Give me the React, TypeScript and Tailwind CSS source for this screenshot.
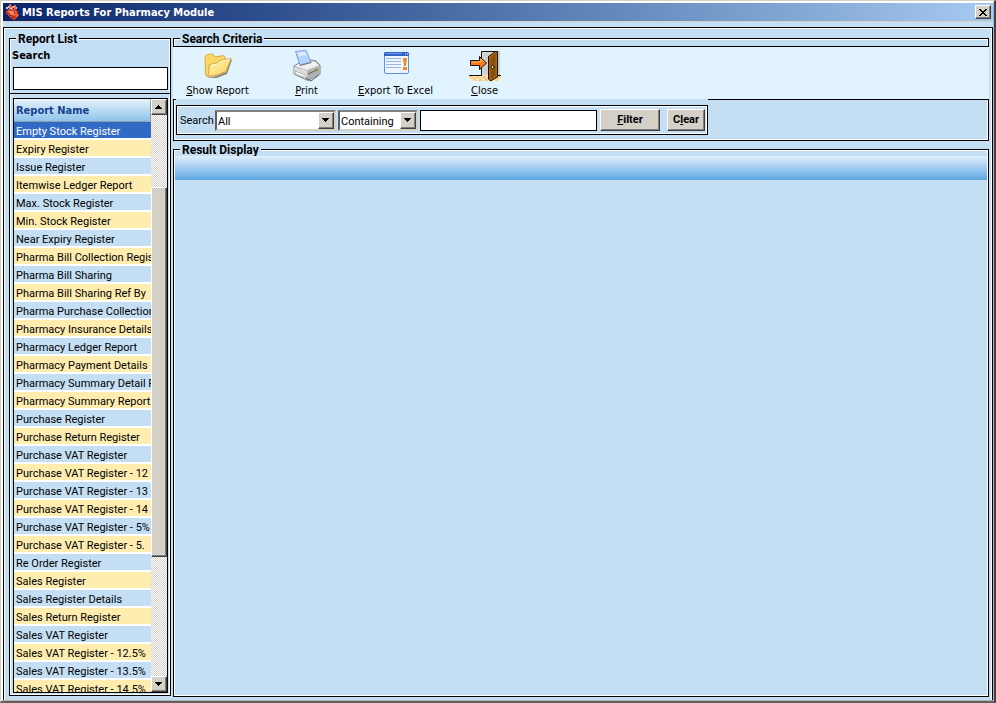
import type { ReactNode } from "react";

const reports = [
  "Empty Stock Register",
  "Expiry Register",
  "Issue Register",
  "Itemwise Ledger Report",
  "Max. Stock Register",
  "Min. Stock Register",
  "Near Expiry Register",
  "Pharma Bill Collection Regis",
  "Pharma Bill Sharing",
  "Pharma Bill Sharing Ref By",
  "Pharma Purchase Collection",
  "Pharmacy Insurance Details",
  "Pharmacy Ledger Report",
  "Pharmacy Payment Details",
  "Pharmacy Summary Detail F",
  "Pharmacy Summary Report",
  "Purchase Register",
  "Purchase Return Register",
  "Purchase VAT Register",
  "Purchase VAT Register - 12",
  "Purchase VAT Register - 13",
  "Purchase VAT Register - 14",
  "Purchase VAT Register - 5%",
  "Purchase VAT Register - 5.",
  "Re Order Register",
  "Sales Register",
  "Sales Register Details",
  "Sales Return Register",
  "Sales VAT Register",
  "Sales VAT Register - 12.5%",
  "Sales VAT Register - 13.5%",
  "Sales VAT Register - 14.5%",
];

const raised =
  "border border-t-white border-l-white border-r-[#404040] border-b-[#404040] bg-[#d4d0c8] shadow-[inset_-1px_-1px_0_#808080]";
const tahoma = "font-['DejaVu_Sans_Condensed','DejaVu_Sans',sans-serif]";

function HeartIcon() {
  return (
    <svg width="16" height="16" viewBox="0 0 16 16" shapeRendering="crispEdges" aria-hidden="true">
      <path d="M1 7 3 5 7 5 10 5 13 8 14 11 12 14 9 16 5 14 1 10Z" fill="#cf3a22" />
      <path d="M4 0h2v5H4zM6 2h2v4H6zM9 1h2v4H9z" fill="#e2705a" />
      <path d="M1 3h2v2H1zM3 2h1v2H3zM8 2h1v2H8zM5 4h2v1H5zM11 3h1v2h-1z" fill="#d9c4c8" />
      <path d="M3 7 7 7 9 9 10 12 7 11 4 9Z" fill="#f08a6a" />
      <path d="M9 6 12 8 13 11 11 13 10 9Z" fill="#e65f38" />
      <path d="M2 9h1v1H2zM5 11h2v1H5zM7 13h2v1H7zM9 8h1v1H9z" fill="#96200f" />
    </svg>
  );
}

function FolderIcon() {
  return (
    <svg width="32" height="32" viewBox="0 0 32 32" aria-hidden="true">
      <defs>
        <linearGradient id="folder" x1="0" y1="0" x2="1" y2="1">
          <stop offset="0" stopColor="#fff8b8" />
          <stop offset="1" stopColor="#fbce55" />
        </linearGradient>
      </defs>
      <path d="M6 28 14 26 24 22 29 9 30 10 25 24 15 28Z" fill="#8c8b80" />
      <path d="M3 6.500 5 4.500 11 4 13 7 22 5.500 23 7 24 21 6 27 3.500 25Z" fill="#f8d964" stroke="#d9ab42" />
      <path d="M6 26.500 7.500 14.500 15 13 18 10.500 29 8.500 24 21.500 15 25Z" fill="url(#folder)" stroke="#d5a63c" />
      <path d="M8.500 15.500 15.500 14 18.500 11.500 28 9.500" fill="none" stroke="#fffbd8" />
    </svg>
  );
}

function PrinterIcon() {
  return (
    <svg width="32" height="32" viewBox="0 0 32 32" aria-hidden="true">
      <path d="M3 16 9 12.500 20 10 25 11 29 15 29 24 17 30.500 3 24Z" fill="#c2c2c2" stroke="#808080" />
      <path d="M4 16 10 12.500 20 11 24 12 28 15 16 20Z" fill="#f0f0f0" />
      <path d="M4.500 1.500 15 .500 20 12 9 15Z" fill="#b4d3fd" stroke="#7aa0e4" />
      <path d="M6 2.500 14 1.500 16 5 8 6Z" fill="#deebff" />
      <path d="M9 15.500 20.500 12.500" stroke="#777" />
      <path d="M3 17 16 21 16 29 3 23.500Z" fill="#dcdcdc" />
      <path d="M16 21 29 16 29 24 17 30Z" fill="#b0b0b0" />
      <path d="M4 21 14 25 16 28 5 24.500Z" fill="#fafafa" stroke="#888" strokeWidth=".5" />
      <path d="M17 24 27 19.500M15 28 20 31 28 25" fill="none" stroke="#606060" />
      <path d="M24 19h2v2h-2z" fill="#5ba52c" />
    </svg>
  );
}

function ExportIcon() {
  return (
    <svg width="32" height="32" viewBox="0 0 32 32" aria-hidden="true">
      <rect x="4.500" y="2.500" width="24" height="21" rx="1.500" fill="#eef5ff" stroke="#5b8fe5" />
      <path d="M4 4q0-2 2-2h21q2 0 2 2v2H4Z" fill="#2e62c9" />
      <path d="M6 3.500h16" stroke="#6d9df0" />
      <path d="M25 4h1M27 4h1" stroke="#fff" />
      <path d="M6 8.500h15M6 11.500h15M6 14.500h15M6 17.500h15" stroke="#97b7e4" />
      <path d="M23 8h4l-1 8h-2zM23 17h4v3h-4z" fill="#ec8b18" />
    </svg>
  );
}

function DoorIcon() {
  return (
    <svg width="32" height="32" viewBox="0 0 32 32" aria-hidden="true">
      <path d="M0 25h13v-2h5l3 2h11v3l-3 3H3L0 28Z" fill="#ffe5b5" />
      <path d="M1 28 4 25M5 30 10 25M10 31 18 24M15 31 20 27M27 31 31 26M2 26 7 31M8 26 13 31M14 26 19 31" stroke="#f6b560" />
      <path d="M12.500 25V1.500H28.500V25" fill="#dededc" stroke="#111" />
      <path d="M14 2h6l-1 22h-5z" fill="#d0d0ce" />
      <path d="M30 1v24" stroke="#aaa" />
      <path d="M0 25.500h13M29 25.500h3" stroke="#111" />
      <path d="m19.500 6.500 7-5 2 .500v25l-7 4-2-2Z" fill="#a76610" stroke="#171006" />
      <path d="m21.500 8 5-4v22l-5 3Z" fill="#885008" />
      <circle cx="23.500" cy="17" r="1.500" fill="#fff0a0" stroke="#111" />
      <path d="M1.500 10.500h9v-4l7 6.500-7 6.500v-4h-9Z" fill="#ff7719" stroke="#151515" />
      <path d="M3 12h9V9l3 3" fill="none" stroke="#ffb850" />
    </svg>
  );
}

function ToolButton({ icon, first, rest }: { icon: ReactNode; first: string; rest: string }) {
  return (
    <button type="button" className={`flex w-[89px] flex-col items-center gap-[3px] text-[11px] leading-3 whitespace-nowrap ${tahoma}`}>
      {icon}
      <span>
        <u>{first}</u>
        {rest}
      </span>
    </button>
  );
}

function Group({ title, className, children }: { title: string; className: string; children: ReactNode }) {
  return (
    <fieldset className={`flex min-w-0 flex-col border border-black shadow-[inset_0_0_0_1px_white] ${className}`}>
      <legend className="ml-1.5 h-[15px] bg-[#c4dff4] px-0.5 text-[12px] leading-4 font-bold font-[Roboto,sans-serif]">
        {title}
      </legend>
      {children}
    </fieldset>
  );
}

function Arrow({ up = false }: { up?: boolean }) {
  return (
    <svg width="8" height="4" viewBox="0 0 8 4" shapeRendering="crispEdges" aria-hidden="true">
      <path d={up ? "M0 4h7L4 0H3z" : "M0 0h7L4 4H3z"} />
    </svg>
  );
}

function DropDown({ label, options, className }: { label: string; options: string[]; className: string }) {
  return (
    <div className={`relative h-[21px] border-2 border-t-[#808080] border-l-[#606060] border-r-[#d4d0c8] border-b-[#d4d0c8] bg-white ${className}`}>
      <select aria-label={label} className="block h-full w-full appearance-none bg-white pt-0.5 pl-px text-[11px] leading-4 outline-none">
        {options.map((o) => (
          <option key={o}>{o}</option>
        ))}
      </select>
      <span className={`pointer-events-none absolute inset-y-0 right-0 flex w-4 items-center justify-center ${raised}`}>
        <Arrow />
      </span>
    </div>
  );
}

function ScrollBar() {
  return (
    <div className="flex w-4 shrink-0 flex-col bg-[#fff] bg-[repeating-conic-gradient(#d4d0c8_0_25%,white_0_50%)] bg-[length:2px_2px]">
      <button type="button" aria-label="Scroll up" className={`flex h-4 items-center justify-center ${raised}`}>
        <Arrow up />
      </button>
      <div className="flex min-h-0 flex-1 flex-col">
        <div className="flex-[72]" />
        <div className={`flex-[370] ${raised}`} />
        <div className="flex-[119]" />
      </div>
      <button type="button" aria-label="Scroll down" className={`flex h-4 items-center justify-center ${raised}`}>
        <Arrow />
      </button>
    </div>
  );
}

export default function App() {
  return (
    <div className="flex h-screen flex-col overflow-hidden border-t border-r-2 border-b-2 border-l border-t-[#d4d0c8] border-r-[#404040] border-b-[#606060] border-l-[#d4d0c8] bg-[#c4dff4] font-[Roboto,'Liberation_Sans',sans-serif] text-[11px] text-black">
      <div className="flex min-h-0 flex-1 flex-col border-t-2 border-r border-b border-l-2 border-t-white border-r-[#9db8dc] border-b-[#b8b4ac] border-l-white">
        <header className="flex h-[19px] shrink-0 items-center border-b border-[#d4d0c8] bg-linear-to-r from-[#0a246a] to-[#a6caf0] pr-0.5 pl-0.5">
          <HeartIcon />
          <h1 className={`flex-1 pt-0.5 pl-px text-[11px] leading-4 font-bold text-white ${tahoma}`}>MIS Reports For Pharmacy Module</h1>
          <button type="button" aria-label="Close window" className={`flex h-3.5 w-4 items-center justify-center ${raised}`}>
            <svg width="8" height="7" viewBox="0 0 8 7" shapeRendering="crispEdges" aria-hidden="true">
              <path d="M0 0h2v1h1v1h2V1h1V0h2v1H7v1H6v1H5v1h1v1h1v1h1v1H6V6H5V5H3v1H2v1H0V6h1V5h1V4h1V3H2V2H1V1H0z" />
            </svg>
          </button>
        </header>

        <main className="mt-[5px] flex min-h-0 flex-1 gap-0.5 border border-b-0 border-black pt-[3px] pr-[3px] pb-[3px] pl-[5px] shadow-[inset_1px_1px_0_white,inset_-1px_0_0_white]">
          <Group title="Report List" className="mb-px w-[162px] shrink-0">
            <div className="flex flex-col border-b border-black pr-0.5 pb-[3px] pl-[3px]">
              <label htmlFor="report-search" className={`-ml-px h-[21px] text-[11px] leading-5 font-bold ${tahoma}`}>
                Search
              </label>
              <input id="report-search" className="h-[23px] w-full border border-black bg-white px-1 outline-none" />
            </div>
            <div className="mt-1 mr-0.5 mb-0.5 ml-[3px] flex min-h-0 flex-1 border border-black bg-white">
              <div className="min-h-0 min-w-0 flex-1 overflow-hidden">
                <table className="w-full table-fixed border-separate border-spacing-0">
                  <thead>
                    <tr>
                      <th className={`h-[23px] border-r border-b border-[#8f9fae] bg-linear-to-b from-[#e6f2fb] to-[#8fc3ea] p-0 pt-0.5 pl-0.5 text-left text-[11px] leading-4 font-bold text-[#154290] ${tahoma}`}>
                        Report Name
                      </th>
                    </tr>
                  </thead>
                  <tbody>
                    {reports.map((name, i) => (
                      <tr key={name} className={i === 0 ? "bg-[#316ac5] text-white" : i % 2 ? "bg-[#ffedb0]" : "bg-[#c4dff4]"}>
                        <td className="h-[18px] border-b-2 border-white p-0 pl-0.5">
                          <div className="h-4 leading-5 whitespace-nowrap">{name}</div>
                        </td>
                      </tr>
                    ))}
                  </tbody>
                </table>
              </div>
              <ScrollBar />
            </div>
          </Group>

          <div className="flex min-w-0 flex-1 flex-col gap-px">
            <Group title="Search Criteria" className="shrink-0">
              <div className="relative -mx-px border-t border-black bg-[#e1f3fd]">
                <div className="flex h-[52px] items-start pt-[3px]">
                  <ToolButton icon={<FolderIcon />} first="S" rest="how Report" />
                  <ToolButton icon={<PrinterIcon />} first="P" rest="rint" />
                  <ToolButton icon={<ExportIcon />} first="E" rest="xport To Excel" />
                  <ToolButton icon={<DoorIcon />} first="C" rest="lose" />
                </div>
              </div>
              <div className="flex">
                <div className="w-0.5 border-t border-black" />
                <form className="mt-1.5 mb-[5px] flex h-[30px] items-center border border-black pr-0.5 pl-[3px] shadow-[inset_0_0_0_1px_white]">
                  <span className="w-[35px] pt-0.5 text-[11px]">Search</span>
                  <DropDown label="Search field" options={["All"]} className="w-[121px]" />
                  <DropDown label="Match type" options={["Containing"]} className="ml-0.5 w-20" />
                  <input aria-label="Search text" className="ml-0.5 h-[21px] w-[177px] border border-black bg-white px-1 outline-none" />
                  <button type="button" className={`ml-[3px] h-[22px] w-[60px] text-[11px] leading-4 font-bold ${raised}`}>
                    <u>F</u>ilter
                  </button>
                  <button type="button" className={`ml-[7px] h-[22px] w-[38px] text-[11px] leading-4 font-bold ${raised}`}>
                    C<u>l</u>ear
                  </button>
                </form>
                <div className="flex-1 border-t border-black" />
              </div>
            </Group>
            <Group title="Result Display" className="min-h-0 flex-1">
              <div className="mx-px -mt-px h-6 bg-linear-to-b from-[#e1effb] to-[#5ba7e2]" />
            </Group>
          </div>
        </main>
      </div>
    </div>
  );
}
